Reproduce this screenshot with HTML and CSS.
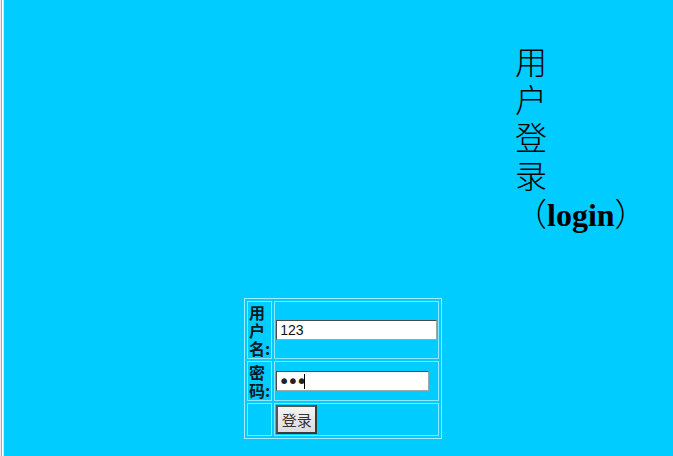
FILE: index.html
```html
<!DOCTYPE html>
<html lang="zh">
<head>
<meta charset="utf-8">
<title>用户登录</title>
<link rel="stylesheet" href="styles.css">
</head>
<body>
<div class="page">
  <div class="frame-edge"></div>
  <main class="main">
    <div class="title">用<br>户<br>登<br>录<br>（<b>login</b>）</div>
    <form class="login-form">
      <table class="login-table">
        <tr>
          <td class="label">用户名:</td>
          <td class="field"><input class="input input-user" type="text" value="123"></td>
        </tr>
        <tr>
          <td class="label">密码:</td>
          <td class="field"><span class="pw-wrap"><input class="input input-pass" type="password" value="123"><span class="caret"></span></span></td>
        </tr>
        <tr>
          <td class="label"></td>
          <td class="field"><button class="btn" type="button">登录</button></td>
        </tr>
      </table>
    </form>
  </main>
</div>
</body>
</html>
```

FILE: styles.css
```css
html, body {
  margin: 0;
  padding: 0;
  height: 100%;
  background: #00ccff;
  overflow: hidden;
}

.page {
  display: flex;
  min-height: 456px;
  background: #00ccff;
}

.frame-edge {
  flex: 0 0 4px;
  background: linear-gradient(to right, #ececec 0 1px, #a8a8a8 1px 2px, #ffffff 2px 3px, #bfefff 3px 4px);
}

.main {
  flex: 1;
  min-width: 0;
  padding-top: 44px;
}

.title {
  margin-left: 511px;
  font-family: "Liberation Serif", "Noto Sans CJK SC", serif;
  font-size: 32px;
  line-height: 38px;
  color: #000;
  text-spacing-trim: space-all;
  font-weight: 300;
}

.title b {
  font-weight: bold;
}

.login-form {
  margin: 64px 0 0 240px;
}

.login-table {
  border: 1px solid #a3ebff;
  border-spacing: 2px;
  border-collapse: separate;
}

.login-table td {
  border: 1px solid #8fe6ff;
  padding: 1px;
  vertical-align: middle;
}

.label {
  width: 21px;
  font-family: "Noto Sans CJK SC", "Liberation Serif", serif;
  font-weight: bold;
  font-size: 16px;
  line-height: 18px;
  color: #0a1a22;
}

.field {
  width: 157px;
}

.input {
  box-sizing: border-box;
  display: block;
  height: 20px;
  margin: 0;
  padding: 1px 3px;
  border: 1px solid #4a4a4a;
  border-right-color: #9aa;
  border-bottom-color: #9aa;
  background: #fff;
  font-family: "Liberation Sans", Arial, sans-serif;
  font-size: 14px;
  color: #111;
  outline: none;
}

.input-user {
  width: 161px;
}

.pw-wrap {
  position: relative;
  display: block;
  width: 153px;
}

.input-pass {
  width: 153px;
  font-family: "DejaVu Sans", sans-serif;
  font-size: 20px;
  letter-spacing: -3px;
  padding: 0 1px;
  color: #222;
}

.caret {
  position: absolute;
  left: 28px;
  top: 3px;
  width: 1px;
  height: 15px;
  background: #000;
}

.btn {
  display: block;
  box-sizing: border-box;
  width: 41px;
  height: 29px;
  margin: 0;
  padding: 0;
  border: 2px solid #3a3a3a;
  border-top-color: #555;
  border-left-color: #555;
  background: linear-gradient(to bottom, #f4f4f4, #dcdcdc);
  font-family: "Noto Sans CJK SC", sans-serif;
  font-size: 15px;
  line-height: 24px;
  color: #333;
}
```
